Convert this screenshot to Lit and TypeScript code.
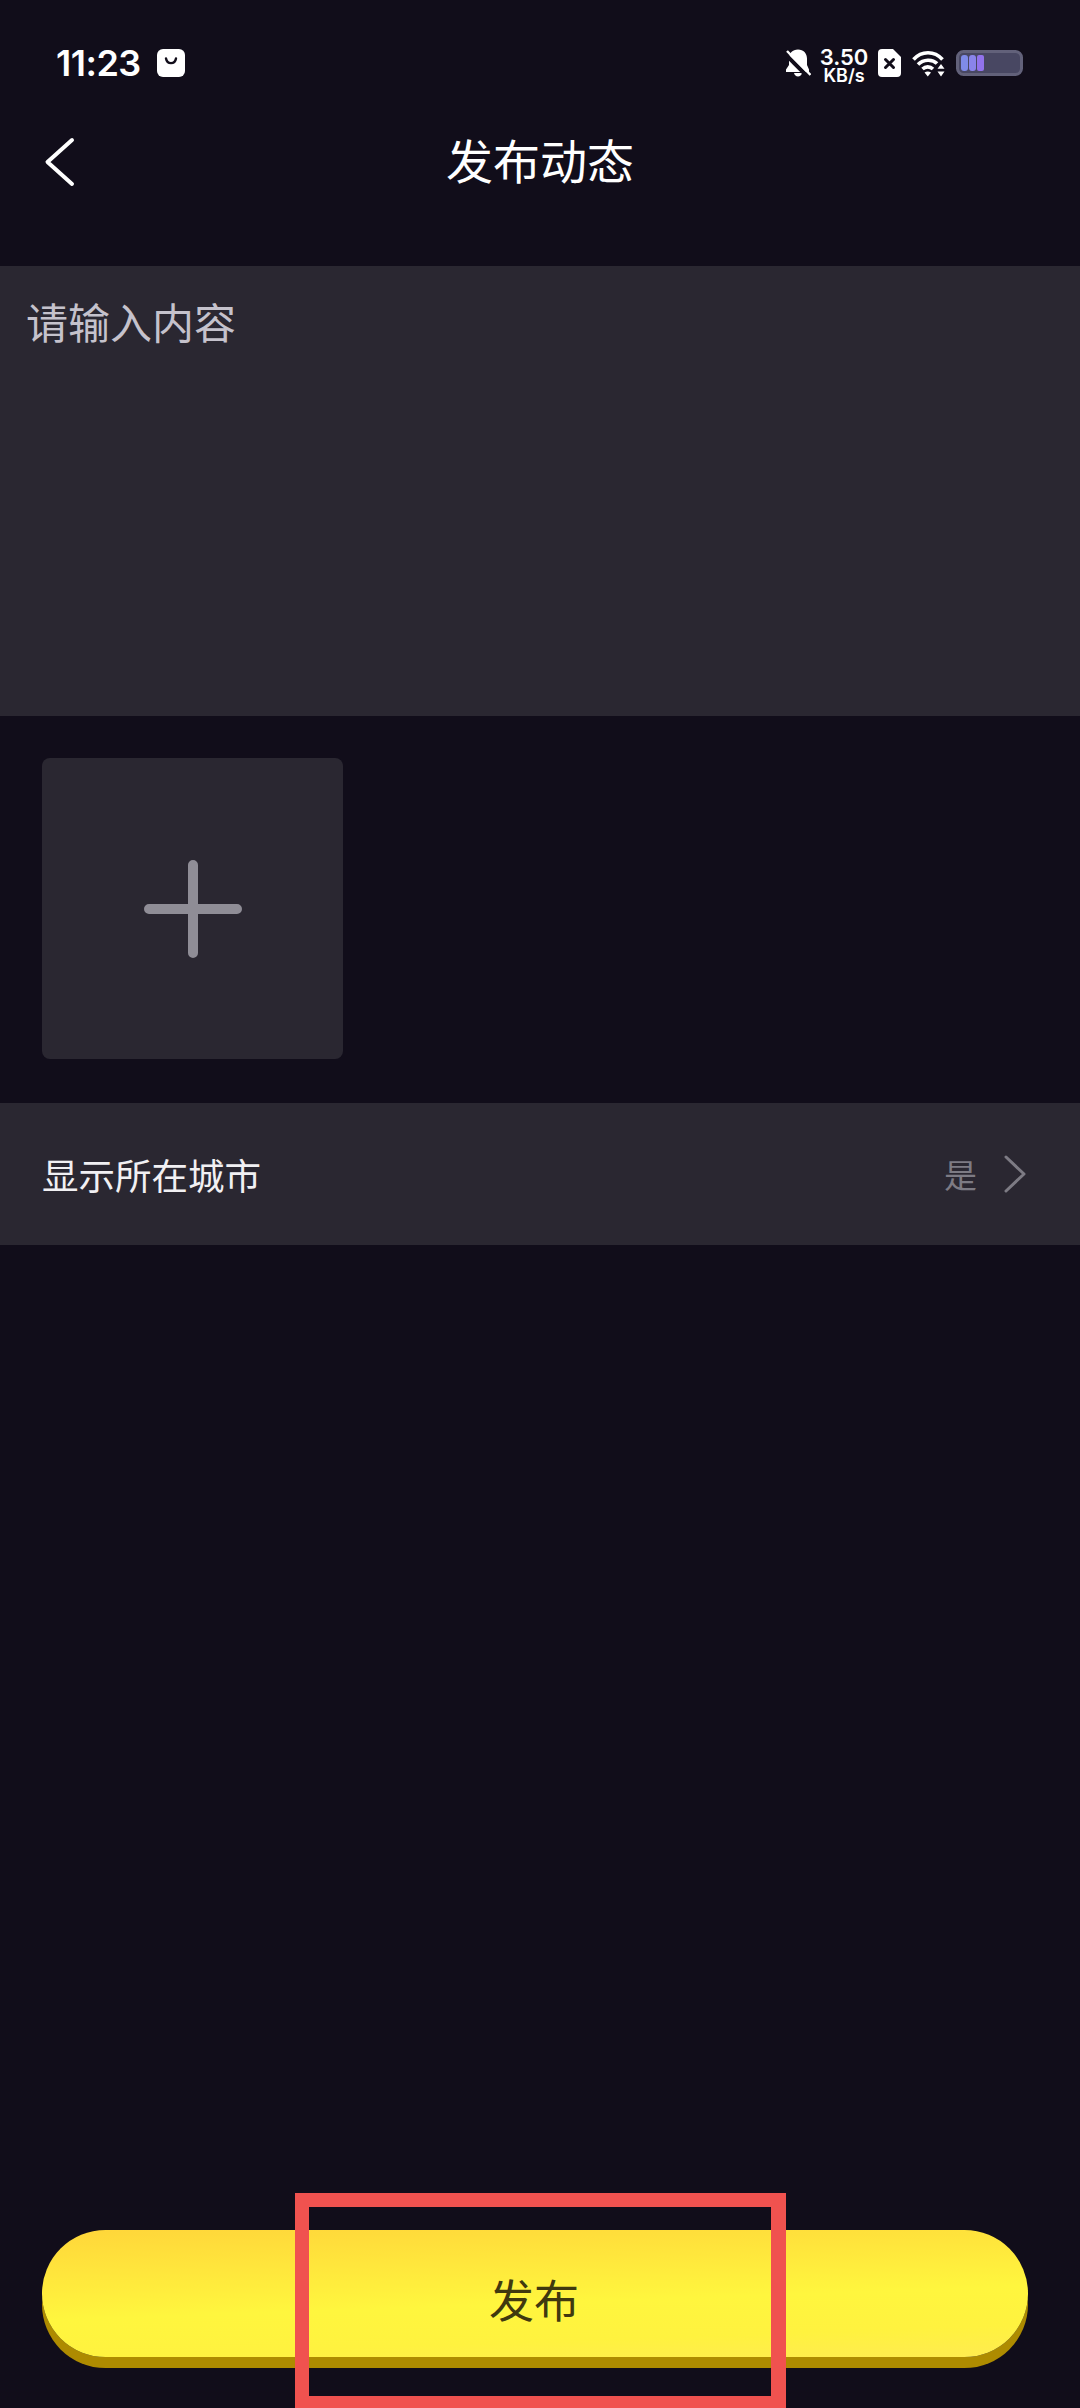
import {LitElement, html, css} from 'lit';
import {customElement} from 'lit/decorators.js';

@customElement('app-root')
export class AppRoot extends LitElement {
  static override styles = css`
    :host {
      display: flex;
      flex-direction: column;
      position: relative;
      width: 1080px;
      height: 2408px;
      overflow: hidden;
      background: #110d1a;
      color: #fff;
      font-family: 'Noto Sans CJK SC', 'Noto Sans', sans-serif;
    }

    svg {
      display: block;
      flex: none;
    }

    .status {
      display: flex;
      align-items: center;
      justify-content: space-between;
      height: 46px;
      margin-top: 40px;
      padding: 0 57px 0 56px;
    }

    .status-left,
    .status-right {
      display: flex;
      align-items: center;
    }

    .status-left {
      gap: 16px;
    }

    .time {
      font-family: Inter, 'Noto Sans', sans-serif;
      font-size: 36px;
      font-weight: 600;
      line-height: 46px;
      letter-spacing: -0.5px;
    }

    .speed {
      display: flex;
      flex-direction: column;
      align-items: center;
      width: 44px;
      margin: 0 12px 0 11px;
      padding-top: 4px;
      font-family: Inter, 'Noto Sans', sans-serif;
      font-weight: 600;
    }

    .speed b {
      font-size: 22px;
      font-weight: 600;
      line-height: 21px;
    }

    .speed span {
      font-size: 18px;
      line-height: 15px;
    }

    .nav {
      display: flex;
      align-items: center;
      justify-content: center;
      position: relative;
      height: 152px;
      padding-bottom: 6px;
      box-sizing: border-box;
    }

    .back {
      position: absolute;
      left: 44px;
      top: 51px;
    }

    .title {
      font-size: 47px;
      font-weight: 400;
      line-height: 60px;
    }

    .input-panel {
      height: 450px;
      box-sizing: border-box;
      margin-top: 28px;
      padding: 25px 26px;
      background: #2a2731;
      color: #c5c2cc;
      font-size: 42px;
      line-height: 60px;
    }

    .add {
      display: flex;
      align-items: center;
      justify-content: center;
      width: 301px;
      height: 301px;
      margin: 42px 0 0 42px;
      border-radius: 8px;
      background: #2a2731;
    }

    .city {
      display: flex;
      align-items: center;
      justify-content: space-between;
      height: 142px;
      margin-top: 44px;
      padding: 0 54px 0 42px;
      background: #2a2731;
      font-size: 36.5px;
      color: #f1f0f3;
    }

    .city-value {
      display: flex;
      align-items: center;
      gap: 27px;
      font-size: 33px;
      color: #7d7b84;
    }

    .footer {
      margin-top: auto;
      padding: 0 52px 51px 42px;
    }

    .publish {
      display: flex;
      align-items: center;
      justify-content: center;
      height: 127px;
      padding: 10px 2px 0 0;
      box-sizing: border-box;
      border-radius: 64px;
      background: linear-gradient(178deg, #ffd63a 0%, #fff63e 56%, #fff23f 80%, #ffeb50 100%);
      box-shadow: 0 11px 0 #ae8b00;
      color: #40390f;
      font-size: 45px;
      line-height: 60px;
    }

    .mark {
      position: absolute;
      left: 295px;
      top: 2193px;
      box-sizing: border-box;
      width: 491px;
      height: 215px;
      border: solid #f0524f;
      border-width: 14px 15px 12px 14px;
    }
  `;

  override render() {
    return html`
      <div class="status">
        <div class="status-left">
          <span class="time">11:23</span>
          <svg width="28" height="28" viewBox="0 0 28 28">
            <rect width="28" height="28" rx="6" fill="#fff"/>
            <path d="M9 9.5c.6 3.2 2.6 4.6 5 4.6s4.400-1.400 5-4.600" fill="none" stroke="#110d1a" stroke-width="2.400" stroke-linecap="round"/>
          </svg>
        </div>
        <div class="status-right">
          <svg width="26" height="28" viewBox="0 0 26 28">
            <path d="M13 .5c-5.500 0-9 3.900-9 9v6.500L1 20.500v2.500h23v-2.500L22 16V9.500c0-5.100-3.500-9-9-9z" fill="#fff"/>
            <path d="M9 24h8c-.5 2.200-2 3.500-4 3.500S9.500 26.200 9 24z" fill="#fff"/>
            <path d="M0 5 23 28" stroke="#110d1a" stroke-width="4"/>
            <path d="M2 2l23.500 24" stroke="#fff" stroke-width="2.400"/>
          </svg>
          <div class="speed"><b>3.50</b><span>KB/s</span></div>
          <svg width="23" height="28" viewBox="0 0 23 28">
            <path d="M4 0h11l8 8v16a4 4 0 0 1-4 4H4a4 4 0 0 1-4-4V4a4 4 0 0 1 4-4z" fill="#fff"/>
            <path d="M7.500 10.500l8 8M15.500 10.500l-8 8" stroke="#110d1a" stroke-width="3" stroke-linecap="round"/>
          </svg>
          <svg style="margin-left:11px" width="33" height="27" viewBox="0 0 33 27">
            <path d="M1.500 9.500C9.500 .5 22.500 .5 30.500 9.500M6 14.500c5.500-5.500 14.500-5.500 19 -1M10.500 19c3-2.800 7.500-2.800 10.500 0" fill="none" stroke="#fff" stroke-width="3.600"/>
            <path d="M12.500 22.500c2-1.500 4.500-1.500 6.500 0l-3.200 4z" fill="#fff"/>
            <path d="M29 14l3.500 4.800h-7zM29 26.500l-3.500-5h7z" fill="#fff"/>
          </svg>
          <svg style="margin-left:11px" width="67" height="26" viewBox="0 0 67 26">
            <rect x="1.500" y="1.500" width="64" height="23" rx="6" fill="#484762" stroke="#62617a" stroke-width="3"/>
            <rect x="5" y="5" width="7" height="16" rx="3" fill="#7f8be8"/>
            <rect x="13" y="5" width="7" height="16" rx="3" fill="#8a84ea"/>
            <rect x="21" y="5" width="7" height="16" rx="2" fill="#9273ec"/>
          </svg>
        </div>
      </div>

      <div class="nav">
        <svg class="back" width="32" height="50" viewBox="0 0 32 50">
          <path d="M28 3 3.500 25 28 47" fill="none" stroke="#fff" stroke-width="4" stroke-linecap="round" stroke-linejoin="round"/>
        </svg>
        <span class="title">发布动态</span>
      </div>

      <div class="input-panel">请输入内容</div>

      <div class="add">
        <svg width="98" height="98" viewBox="0 0 98 98">
          <path d="M49 5v88M5 49h88" stroke="#8f8d96" stroke-width="10" stroke-linecap="round"/>
        </svg>
      </div>

      <div class="city">
        <span>显示所在城市</span>
        <span class="city-value">
          是
          <svg width="22" height="38" viewBox="0 0 22 38">
            <path d="M2 2l18 17L2 36" fill="none" stroke="#7d7b84" stroke-width="3" stroke-linecap="round" stroke-linejoin="round"/>
          </svg>
        </span>
      </div>

      <div class="footer">
        <div class="publish">发布</div>
      </div>

      <div class="mark"></div>
    `;
  }
}

declare global {
  interface HTMLElementTagNameMap {
    'app-root': AppRoot;
  }
}
